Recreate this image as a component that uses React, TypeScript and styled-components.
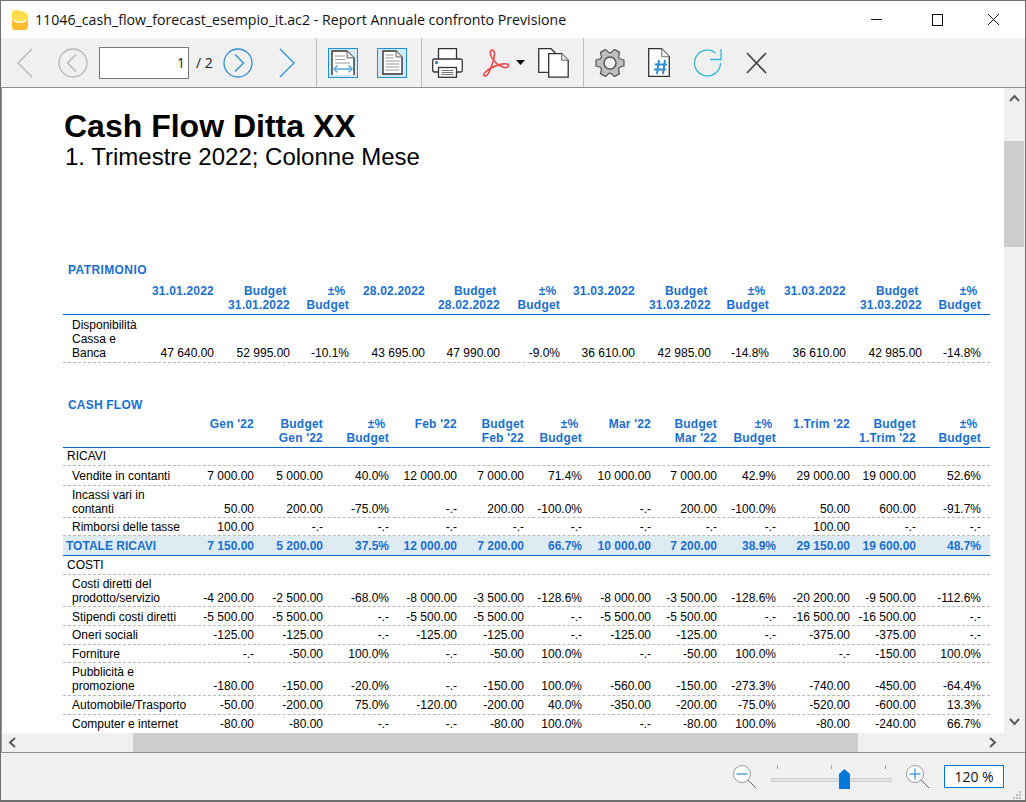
// report preview window
import styled, { createGlobalStyle } from "styled-components";

const Global = createGlobalStyle`
    html, body { margin: 0; padding: 0; background: #f0f0f0; }
    * { box-sizing: border-box; }
`;

const Win = styled.div`
    width: 1026px;
    height: 802px;
    border: 1px solid #6f6f6f;
    border-bottom-width: 2px;
    background: #f0f0f0;
    display: flex;
    flex-direction: column;
    font-family: "Liberation Sans", Arial, sans-serif;
    overflow: hidden;
`;

// title bar
const TitleBar = styled.div`
    height: 37px;
    flex: none;
    background: #fff;
    display: flex;
    align-items: center;
    padding-left: 11px;
`;
const TitleText = styled.div`
    font-family: "Open Sans", sans-serif;
    font-size: 14.2px;
    color: #111;
    margin-left: 7px;
    flex: 1;
    white-space: nowrap;
`;
const WinBtn = styled.div<{ $w: number; $ml?: number }>`
    width: ${(p) => p.$w}px;
    margin-left: ${(p) => p.$ml ?? 0}px;
    display: flex;
    justify-content: center;
`;

// toolbar
const ToolBar = styled.div`
    height: 50px;
    flex: none;
    background: #f0f0f0;
    border-bottom: 1px solid #8e8e8e;
    display: flex;
    align-items: stretch;
`;
const ToolGroup = styled.div<{ $w: number; $last?: boolean }>`
    width: ${(p) => p.$w}px;
    ${(p) => (p.$last ? "flex: 1;" : "border-right: 1px solid #bdbdbd;")}
    display: flex;
    align-items: center;
`;
const Tool = styled.div<{ $ml: number }>`
    margin-left: ${(p) => p.$ml}px;
    display: flex;
    align-items: center;
    justify-content: center;
`;
const PageInput = styled.div`
    margin-left: 11px;
    width: 90px;
    height: 32px;
    background: #fff;
    border: 1px solid #7a7a7a;
    font-family: "Open Sans", sans-serif;
    font-size: 14px;
    color: #222;
    display: flex;
    align-items: center;
    justify-content: flex-end;
    padding-right: 3px;
`;
const PageCount = styled.div`
    margin-left: 7px;
    font-family: "Open Sans", sans-serif;
    font-size: 14px;
    color: #222;
    white-space: nowrap;
`;
const ModeBtn = styled.div<{ $ml: number }>`
    margin-left: ${(p) => p.$ml}px;
    width: 30px;
    height: 30px;
    border: 1px solid #1f8fd6;
    background: #d6e8f5;
    display: flex;
    align-items: center;
    justify-content: center;
`;

// document area
const DocArea = styled.div`
    height: 665px;
    flex: none;
    border-bottom: 1px solid #8e8e8e;
    display: grid;
    grid-template-columns: 1003px 20px;
    grid-template-rows: 645px 19px;
`;
const Sheet = styled.div`
    background: #fff;
    overflow: hidden;
    padding: 0 0 0 61px;
    border-left: 1px solid #9a9a9a;
`;
const Heading = styled.h1`
    margin: 22px 0 0 1px;
    font-size: 32px;
    line-height: 32px;
    font-weight: 700;
    color: #000;
    white-space: nowrap;
`;
const SubHeading = styled.h2`
    margin: 2px 0 0 2px;
    font-size: 24px;
    line-height: 26px;
    font-weight: 400;
    color: #000;
    white-space: nowrap;
`;
const SectionTitle = styled.div<{ $mt: number; $ls: number }>`
    margin: ${(p) => p.$mt}px 0 0 5px;
    font-size: 12px;
    line-height: 14px;
    font-weight: 700;
    color: #1a6fd0;
    letter-spacing: ${(p) => p.$ls}px;
`;
const Grid = styled.div<{ $cols: number[] }>`
    display: grid;
    width: 927px;
    grid-template-columns: ${(p) => p.$cols.map((c) => c + "px").join(" ")};
`;
const HeadRow = styled(Grid)<{ $h: number; $pb: number }>`
    height: ${(p) => p.$h}px;
    padding-bottom: ${(p) => p.$pb}px;
    border-bottom: 1px solid #0066cc;
    align-items: end;
`;
const HeadCell = styled.div<{ $ls: number }>`
    height: 28px;
    font-size: 12px;
    line-height: 14px;
    font-weight: 700;
    color: #1a6fd0;
    text-align: right;
    white-space: pre;
    letter-spacing: ${(p) => p.$ls}px;
`;
const Row = styled(Grid)<{ $h: number; $total?: boolean; $pb?: number }>`
    height: ${(p) => p.$h}px;
    align-items: end;
    padding-bottom: ${(p) => p.$pb ?? 2}px;
    border-bottom: ${(p) => (p.$total ? "1px solid #0066cc" : "1px dashed #b8b8b8")};
    background: ${(p) => (p.$total ? "#deebf3" : "transparent")};
`;
const Label = styled.div<{ $indent: number; $total?: boolean }>`
    padding-left: ${(p) => p.$indent}px;
    font-size: 12px;
    line-height: 14px;
    white-space: pre;
    color: ${(p) => (p.$total ? "#1a6fd0" : "#000")};
    font-weight: ${(p) => (p.$total ? 700 : 400)};
`;
const Num = styled.div<{ $total?: boolean }>`
    font-size: 12px;
    line-height: 14px;
    text-align: right;
    white-space: pre;
    color: ${(p) => (p.$total ? "#1a6fd0" : "#000")};
    font-weight: ${(p) => (p.$total ? 700 : 400)};
`;

// scrollbars
const VScroll = styled.div`
    background: #f0f0f0;
    display: flex;
    flex-direction: column;
    align-items: stretch;
`;
const VThumb = styled.div`
    margin-top: 33px;
    height: 106px;
    background: #cdcdcd;
`;
const ArrowBox = styled.div<{ $h: number; $w: number }>`
    height: ${(p) => p.$h}px;
    width: ${(p) => p.$w}px;
    flex: none;
    display: flex;
    align-items: center;
    justify-content: center;
`;
const HScroll = styled.div`
    background: #f0f0f0;
    display: flex;
    align-items: stretch;
    border-left: 1px solid #9a9a9a;
`;
const HThumb = styled.div`
    margin-left: 111px;
    width: 725px;
    background: #cdcdcd;
`;
const HSpacer = styled.div`
    flex: 1;
`;
const Corner = styled.div`
    background: #f0f0f0;
`;

// bottom bar with the zoom
const ZoomBar = styled.div`
    flex: 1;
    background: #f0f0f0;
    display: flex;
    align-items: flex-start;
    padding: 12px 0 0 732px;
`;
const Slider = styled.div`
    margin-left: 14px;
    width: 121px;
    height: 24px;
    display: flex;
    flex-direction: column;
`;
const Ticks = styled.div`
    display: flex;
    justify-content: space-between;
    padding: 0 6px;
    height: 13px;
`;
const Tick = styled.div`
    width: 1px;
    height: 4px;
    background: #a0a0a0;
`;
const Track = styled.div`
    height: 4px;
    background: #e2e2e2;
    border: 1px solid #d0d0d0;
`;
const Thumb = styled.svg`
    position: absolute;
    margin: 4px 0 0 68px;
`;
const ZoomBox = styled.div`
    margin-left: 14px;
    width: 60px;
    height: 23px;
    background: #fff;
    border: 1px solid #0078d7;
    font-family: "Open Sans", sans-serif;
    font-size: 14px;
    color: #111;
    display: flex;
    align-items: center;
    justify-content: center;
`;
const Grip = styled.svg`
    margin: 25px 0 0 8px;
`;

// icons
const AppIcon = () => (
    <svg width="16" height="20" viewBox="0 0 16 20">
        <path d="M0 3a3 3 0 0 1 3-3c5 0 9 2 13 4v6c-5 2.500-11 2.500-16 0z" fill="#fedc4e" />
        <path d="M0 10c5 3.500 11 3.500 16 0v7a3 3 0 0 1-3 3H3a3 3 0 0 1-3-3z" fill="#fdbb2f" />
        <path d="M2 10.500c4 2.500 8 2.500 12 0" stroke="#fff" strokeWidth="1.400" fill="none" />
    </svg>
);
const Chevron = ({ left, color }: { left?: boolean; color: string }) => (
    <svg width="16" height="30" viewBox="0 0 16 30">
        <path d={left ? "M15 1 1 15l14 14" : "M1 1l14 14L1 29"} fill="none" stroke={color} strokeWidth="1.3" />
    </svg>
);
const CircleNav = ({ left, color }: { left?: boolean; color: string }) => (
    <svg width="30" height="30" viewBox="0 0 30 30">
        <circle cx="15" cy="15" r="14" fill="none" stroke={color} strokeWidth="1.3" />
        <path d={left ? "M18 6.500 9.500 15l8.500 8.500" : "M12 6.500l8.500 8.500-8.500 8.500"} fill="none" stroke={color} strokeWidth="1.3" />
    </svg>
);
const PageWide = () => (
    <svg width="24" height="25" viewBox="0 0 24 25">
        <path d="M1 25V1h15l7 7v17z" fill="#fff" />
        <path d="M1 25V1h15l7 7v17" fill="none" stroke="#333" strokeWidth="1.400" />
        <path d="M16 1v7h7" fill="#e8e8e8" stroke="#666" />
        <path d="M4 6h10M4 9.500h10M4 13h15" stroke="#999" />
        <path d="M3 19h18" stroke="#3a9ad9" strokeWidth="1.300" />
        <path d="M6.500 15.500 3 19l3.500 3.500M17.500 15.500 21 19l-3.500 3.500" fill="none" stroke="#5aaee6" strokeWidth="1.600" />
    </svg>
);
const PageFull = () => (
    <svg width="21" height="25" viewBox="0 0 21 25">
        <path d="M1 1h13l6 6v17H1z" fill="#fff" stroke="#333" strokeWidth="1.400" />
        <path d="M14 1v6h6" fill="#e8e8e8" stroke="#666" />
        <path d="M3.500 5h8M3.500 8h8M3.500 11h14M3.500 14h14M3.500 17h14M3.500 20h14" stroke="#999" />
    </svg>
);
const Printer = () => (
    <svg width="31" height="30" viewBox="0 0 31 30">
        <path d="M6.500 11V.700h18V11" fill="#fff" stroke="#333" strokeWidth="1.300" />
        <path d="M6.500 24H2.500A1.800 1.800 0 0 1 .700 22.200V12.800A1.800 1.800 0 0 1 2.500 11h26a1.800 1.800 0 0 1 1.800 1.800v9.400a1.800 1.800 0 0 1-1.800 1.800h-4" fill="#fff" stroke="#333" strokeWidth="1.300" />
        <rect x="3" y="13" width="3" height="3" fill="#2f8fd3" />
        <rect x="6.500" y="19.500" width="18" height="9.800" fill="#fff" stroke="#333" strokeWidth="1.300" />
        <path d="M9.500 22.500h12M9.500 24.500h12M9.500 26.500h12" stroke="#777" />
    </svg>
);
const PdfIcon = () => (
    <svg width="28" height="28" viewBox="0 0 28 28">
        <path
            d="M9 1C6 1 7 8 11.700 12.300 14 16 17 17 21 18.500 25 19 26.500 17 25 15.500 23 14 16 14.500 6.300 20 2 23 0 25 1 26.500 2 28 5 26.500 7 21 9 16 12 9 11.500 4 11 2 10.500 1 9 1z"
            fill="none"
            stroke="#f0474c"
            strokeWidth="1.600"
        />
    </svg>
);
const Caret = () => (
    <svg width="9" height="5" viewBox="0 0 9 5">
        <path d="M0 0h9L4.500 5z" fill="#111" />
    </svg>
);
const CopyIcon = () => (
    <svg width="31" height="30" viewBox="0 0 31 30">
        <path d="M10 24.300H.700V.700H13l5 5" fill="#fff" stroke="#333" strokeWidth="1.300" />
        <path d="M10.700 5.700h13l6.500 6.500v17H10.700z" fill="#fff" stroke="#333" strokeWidth="1.300" />
        <path d="M23.700 5.700v6.500h6.500" fill="#eee" stroke="#666" />
    </svg>
);

// six teeth, left and right tooth on the horizontal
const gearPath = Array.from({ length: 6 }, (_, k) => {
    const at = (deg: number, r: number) => {
        const a = ((k * 60 + deg) * Math.PI) / 180;
        return `${(15 + r * Math.cos(a)).toFixed(2)} ${(14 + r * Math.sin(a)).toFixed(2)}`;
    };
    return `${k === 0 ? "M" : "L"}${at(-24, 10.500)} L${at(-12, 14.300)} L${at(12, 14.300)} L${at(24, 10.500)}`;
}).join(" ") + "z";

const GearIcon = () => (
    <svg width="30" height="28" viewBox="0 0 30 28">
        <path d={gearPath} fill="#bfbebd" stroke="#555" strokeWidth="1.200" strokeLinejoin="round" />
        <circle cx="15" cy="14" r="6" fill="#f0f0f0" stroke="#555" strokeWidth="1.500" />
    </svg>
);
const HashDoc = () => (
    <svg width="22" height="29" viewBox="0 0 22 29">
        <path d="M.700.700h13l7.600 8v19.600H.700z" fill="#fff" stroke="#333" strokeWidth="1.300" />
        <path d="M13.700.700v8h7.600" fill="#eee" stroke="#777" />
        <path d="M11 12 9 26M17 12l-2 14M7 16.500h12M6 21.500h12" stroke="#2f8fd3" strokeWidth="2" fill="none" />
    </svg>
);
const RefreshIcon = () => (
    <svg width="29" height="30" viewBox="0 0 29 30">
        <path d="M22.500 4.700A13 13 0 1 0 27.500 15" fill="none" stroke="#33b5d6" strokeWidth="1.300" />
        <path d="M28 1v10.500H17" fill="none" stroke="#33b5d6" strokeWidth="1.300" />
    </svg>
);
const CloseBig = () => (
    <svg width="21" height="22" viewBox="0 0 21 22">
        <path d="M1 1l19 20M20 1 1 21" stroke="#444" strokeWidth="1.700" />
    </svg>
);
const MinIco = () => (
    <svg width="11" height="1" viewBox="0 0 11 1">
        <rect width="11" height="1" fill="#111" />
    </svg>
);
const MaxIco = () => (
    <svg width="11" height="12" viewBox="0 0 11 12">
        <rect x=".5" y=".5" width="10" height="11" fill="none" stroke="#111" />
    </svg>
);
const CloseIco = () => (
    <svg width="13" height="13" viewBox="0 0 13 13">
        <path d="M1 1l11 11M12 1 1 12" stroke="#111" />
    </svg>
);
const ScrollArrow = ({ d }: { d: string }) => (
    <svg width="11" height="11" viewBox="0 0 11 11">
        <path d={d} fill="none" stroke="#555" strokeWidth="1.900" />
    </svg>
);
const Magnifier = ({ plus }: { plus?: boolean }) => (
    <svg width="24" height="24" viewBox="0 0 24 24">
        <circle cx="9" cy="9" r="8.500" fill="#fff" stroke="#9a9a9a" />
        <path d="M15 15l8 8" stroke="#666" />
        <path d="M3.500 9h11" stroke="#3a96d6" strokeWidth="1.300" />
        {plus && <path d="M9 3.500v11" stroke="#3a96d6" strokeWidth="1.300" />}
    </svg>
);

// report data
const patCols = [88, 63, 76, 59, 76, 75, 60, 75, 76, 58, 77, 76, 59, 9];
const cfCols = [121, 70, 69, 66, 68, 67, 58, 69, 66, 59, 74, 66, 65, 9];

const patHead = [
    "31.01.2022", "Budget \n31.01.2022", "±% \nBudget", "28.02.2022", "Budget \n28.02.2022", "±% \nBudget",
    "31.03.2022", "Budget \n31.03.2022", "±% \nBudget", "31.03.2022", "Budget \n31.03.2022", "±% \nBudget",
];
const patRow = ["47 640.00", "52 995.00", "-10.1%", "43 695.00", "47 990.00", "-9.0%", "36 610.00", "42 985.00", "-14.8%", "36 610.00", "42 985.00", "-14.8%"];

const cfHead = [
    "Gen '22", "Budget\nGen '22", "±% \nBudget", "Feb '22", "Budget\nFeb '22", "±% \nBudget",
    "Mar '22", "Budget\nMar '22", "±% \nBudget", "1.Trim '22", "Budget\n1.Trim '22", "±% \nBudget",
];

type CfRow = { label: string; h: number; vals?: string[]; total?: boolean; group?: boolean; pb?: number };

const cfRows: CfRow[] = [
    { label: "RICAVI", h: 18, group: true },
    { label: "Vendite in contanti", h: 20, vals: ["7 000.00", "5 000.00", "40.0%", "12 000.00", "7 000.00", "71.4%", "10 000.00", "7 000.00", "42.9%", "29 000.00", "19 000.00", "52.6%"] },
    { label: "Incassi vari in\ncontanti", h: 32, pb: 1, vals: ["50.00", "200.00", "-75.0%", "-.-", "200.00", "-100.0%", "-.-", "200.00", "-100.0%", "50.00", "600.00", "-91.7%"] },
    { label: "Rimborsi delle tasse", h: 18, pb: 1, vals: ["100.00", "-.-", "-.-", "-.-", "-.-", "-.-", "-.-", "-.-", "-.-", "100.00", "-.-", "-.-"] },
    { label: "TOTALE RICAVI", h: 20, total: true, vals: ["7 150.00", "5 200.00", "37.5%", "12 000.00", "7 200.00", "66.7%", "10 000.00", "7 200.00", "38.9%", "29 150.00", "19 600.00", "48.7%"] },
    { label: "COSTI", h: 19, group: true },
    { label: "Costi diretti del\nprodotto/servizio", h: 32, pb: 1, vals: ["-4 200.00", "-2 500.00", "-68.0%", "-8 000.00", "-3 500.00", "-128.6%", "-8 000.00", "-3 500.00", "-128.6%", "-20 200.00", "-9 500.00", "-112.6%"] },
    { label: "Stipendi costi diretti", h: 19, pb: 1, vals: ["-5 500.00", "-5 500.00", "-.-", "-5 500.00", "-5 500.00", "-.-", "-5 500.00", "-5 500.00", "-.-", "-16 500.00", "-16 500.00", "-.-"] },
    { label: "Oneri sociali", h: 19, vals: ["-125.00", "-125.00", "-.-", "-125.00", "-125.00", "-.-", "-125.00", "-125.00", "-.-", "-375.00", "-375.00", "-.-"] },
    { label: "Forniture", h: 18, pb: 1, vals: ["-.-", "-50.00", "100.0%", "-.-", "-50.00", "100.0%", "-.-", "-50.00", "100.0%", "-.-", "-150.00", "100.0%"] },
    { label: "Pubblicità e\npromozione", h: 33, vals: ["-180.00", "-150.00", "-20.0%", "-.-", "-150.00", "100.0%", "-560.00", "-150.00", "-273.3%", "-740.00", "-450.00", "-64.4%"] },
    { label: "Automobile/Trasporto", h: 19, vals: ["-50.00", "-200.00", "75.0%", "-120.00", "-200.00", "40.0%", "-350.00", "-200.00", "-75.0%", "-520.00", "-600.00", "13.3%"] },
    { label: "Computer e internet", h: 19, vals: ["-80.00", "-80.00", "-.-", "-.-", "-80.00", "100.0%", "-.-", "-80.00", "100.0%", "-80.00", "-240.00", "66.7%"] },
];

export default function App() {
    return (
        <Win>
            <Global />
            <TitleBar>
                <AppIcon />
                <TitleText>11046_cash_flow_forecast_esempio_it.ac2 - Report Annuale confronto Previsione</TitleText>
                <WinBtn $w={38}><MinIco /></WinBtn>
                <WinBtn $w={61} $ml={12}><MaxIco /></WinBtn>
                <WinBtn $w={50}><CloseIco /></WinBtn>
                <WinBtn $w={7} />
            </TitleBar>

            <ToolBar>
                <ToolGroup $w={316}>
                    <Tool $ml={16}><Chevron left color="#b5b5b5" /></Tool>
                    <Tool $ml={25}><CircleNav left color="#b5b5b5" /></Tool>
                    <PageInput>1</PageInput>
                    <PageCount>/ 2</PageCount>
                    <Tool $ml={10}><CircleNav color="#2f8fd3" /></Tool>
                    <Tool $ml={26}><Chevron color="#2f8fd3" /></Tool>
                </ToolGroup>
                <ToolGroup $w={105}>
                    <ModeBtn $ml={11}><PageWide /></ModeBtn>
                    <ModeBtn $ml={19}><PageFull /></ModeBtn>
                </ToolGroup>
                <ToolGroup $w={162}>
                    <Tool $ml={10}><Printer /></Tool>
                    <Tool $ml={20}><PdfIcon /></Tool>
                    <Tool $ml={5}><Caret /></Tool>
                    <Tool $ml={13}><CopyIcon /></Tool>
                </ToolGroup>
                <ToolGroup $w={200} $last>
                    <Tool $ml={11}><GearIcon /></Tool>
                    <Tool $ml={23}><HashDoc /></Tool>
                    <Tool $ml={23}><RefreshIcon /></Tool>
                    <Tool $ml={24}><CloseBig /></Tool>
                </ToolGroup>
            </ToolBar>

            <DocArea>
                <Sheet>
                    <Heading>Cash Flow Ditta XX</Heading>
                    <SubHeading>1. Trimestre 2022; Colonne Mese</SubHeading>

                    <SectionTitle $mt={93} $ls={0.4}>PATRIMONIO</SectionTitle>
                    <HeadRow $cols={patCols} $h={38} $pb={2}>
                        <div />
                        {patHead.map((t, i) => <HeadCell key={i} $ls={0.2}>{t}</HeadCell>)}
                    </HeadRow>
                    <Row $cols={patCols} $h={48}>
                        <Label $indent={9}>{"Disponibilità\nCassa e\nBanca"}</Label>
                        {patRow.map((t, i) => <Num key={i}>{t}</Num>)}
                    </Row>

                    <SectionTitle $mt={35} $ls={0.2}>CASH FLOW</SectionTitle>
                    <HeadRow $cols={cfCols} $h={36} $pb={2}>
                        <div />
                        {cfHead.map((t, i) => <HeadCell key={i} $ls={0.2}>{t}</HeadCell>)}
                    </HeadRow>
                    {cfRows.map((r) => (
                        <Row key={r.label} $cols={cfCols} $h={r.h} $total={r.total} $pb={r.pb}>
                            <Label $indent={r.group ? 4 : r.total ? 3 : 9} $total={r.total}>{r.label}</Label>
                            {r.vals?.map((t, i) => <Num key={i} $total={r.total}>{t}</Num>)}
                        </Row>
                    ))}
                </Sheet>
                <VScroll>
                    <ArrowBox $h={20} $w={20}><ScrollArrow d="M1 8l4.500-5L10 8" /></ArrowBox>
                    <VThumb />
                    <HSpacer />
                    <ArrowBox $h={24} $w={20}><ScrollArrow d="M1 3l4.500 5L10 3" /></ArrowBox>
                </VScroll>
                <HScroll>
                    <ArrowBox $h={19} $w={20}><ScrollArrow d="M8 1 3 5.500 8 10" /></ArrowBox>
                    <HThumb />
                    <HSpacer />
                    <ArrowBox $h={19} $w={24}><ScrollArrow d="M3 1l5 4.500L3 10" /></ArrowBox>
                </HScroll>
                <Corner />
            </DocArea>

            <ZoomBar>
                <Magnifier />
                <Slider>
                    <Thumb width="11" height="20" viewBox="0 0 11 20">
                        <path d="M0 5 5.500 0 11 5v15H0z" fill="#0078d7" />
                    </Thumb>
                    <Ticks><Tick /><Tick /><Tick /></Ticks>
                    <Track />
                </Slider>
                <Tool $ml={14}><Magnifier plus /></Tool>
                <ZoomBox>120 %</ZoomBox>
                <Grip width="10" height="10" viewBox="0 0 10 10">
                    <path d="M7 1h2v2H7zM4 4h2v2H4zM7 4h2v2H7zM1 7h2v2H1zM4 7h2v2H4zM7 7h2v2H7z" fill="#bdbdbd" />
                </Grip>
            </ZoomBar>
        </Win>
    );
}
